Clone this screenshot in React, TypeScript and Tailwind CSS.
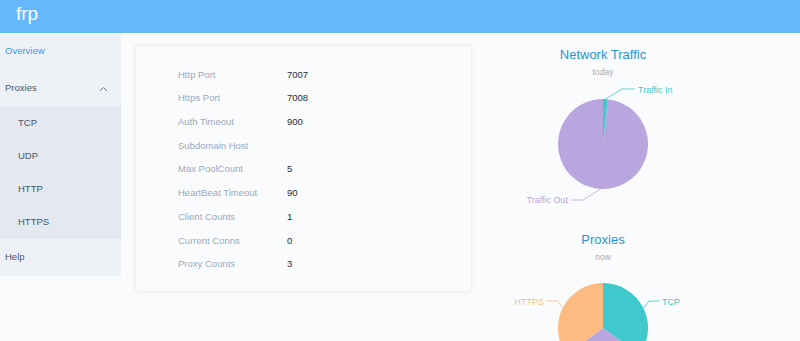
import React from "react";

const font = { fontFamily: '"Liberation Sans", Arial, sans-serif' };

type Row = { label: string; value: string };

const rows: Row[] = [
  { label: "Http Port", value: "7007" },
  { label: "Https Port", value: "7008" },
  { label: "Auth Timeout", value: "900" },
  { label: "Subdomain Host", value: "" },
  { label: "Max PoolCount", value: "5" },
  { label: "HeartBeat Timeout", value: "90" },
  { label: "Client Counts", value: "1" },
  { label: "Current Conns", value: "0" },
  { label: "Proxy Counts", value: "3" },
];

// slice path, angles in degrees clockwise from 12 o'clock
const slice = (cx: number, cy: number, r: number, a0: number, a1: number) => {
  const p = (a: number) => {
    const rad = (a * Math.PI) / 180;
    return [cx + r * Math.sin(rad), cy - r * Math.cos(rad)];
  };
  const [x0, y0] = p(a0);
  const [x1, y1] = p(a1);
  const large = a1 - a0 > 180 ? 1 : 0;
  return `M${cx},${cy} L${x0},${y0} A${r},${r} 0 ${large} 1 ${x1},${y1} Z`;
};

const TEAL = "#3fc9cc";
const PURPLE = "#b9a6df";
const ORANGE = "#fdbb82";

const Chart = ({ title, sub, children }: { title: string; sub: string; children: React.ReactNode }) => (
  <div className="w-[262px] h-[185px] flex flex-col items-center">
    <div className="pt-[7px] text-[13px] leading-[16px] text-[#2a93d5]">{title}</div>
    <div className="mt-[4px] text-[8.5px] leading-[10px] text-[#aaaaaa]">{sub}</div>
    <svg width="262" height="148" className="block">
      {children}
    </svg>
  </div>
);

export default function App() {
  return (
    <div className="w-[800px] h-[341px] overflow-hidden bg-[#fafbfc]" style={font}>
      {/* top bar */}
      <div className="h-[33px] bg-[#66b8fc] flex items-center pl-[16px] pb-[4px]">
        <span className="text-white text-[19px]">frp</span>
      </div>

      <div className="flex items-start">
        {/* sidebar */}
        <div className="w-[121px] bg-[#eef1f6] text-[9.5px] text-[#48576a]">
          <div className="h-[37px] flex items-center pl-[5px] text-[#3a9cf0]">Overview</div>
          <div className="h-[37px] flex items-center justify-between pl-[5px] pr-[13px]">
            <span>Proxies</span>
            <svg width="9" height="6" viewBox="0 0 9 6">
              <polyline points="1,5 4.5,1.5 8,5" fill="none" stroke="#6b7a8c" strokeWidth="1" />
            </svg>
          </div>
          <div className="bg-[#e4e8f1]">
            {["TCP", "UDP", "HTTP", "HTTPS"].map((t) => (
              <div key={t} className="h-[33px] flex items-center pl-[18px]">
                {t}
              </div>
            ))}
          </div>
          <div className="h-[37px] flex items-center pl-[5px]">Help</div>
        </div>

        {/* server info card */}
        <div className="ml-[14px] mt-[12px] w-[337px] h-[247px] bg-[#fafbfc] border border-[#eff1f4] rounded-[2px] shadow-[0_0_4px_rgba(0,0,0,0.04)] pt-[17px] pl-[42px]">
          {rows.map((r) => (
            <div key={r.label} className="h-[23.7px] flex items-center text-[9.5px]">
              <span className="w-[109px] text-[#99a9bf]">{r.label}</span>
              <span className="text-[#1f2d3d]">{r.value}</span>
            </div>
          ))}
        </div>

        {/* charts */}
        <div className="mt-[7px] flex flex-col">
          <Chart title="Network Traffic" sub="today">
            <path d={slice(131, 67, 45, 6, 360)} fill={PURPLE} />
            <path d={slice(131, 67, 45, 0, 6)} fill={TEAL} />
            <polyline points="133.4,22.1 150,12 163,12" fill="none" stroke={TEAL} strokeWidth="0.8" />
            <text x="166" y="15.5" fontSize="9" fill={TEAL}>Traffic In</text>
            <polyline points="128.6,112 111,123 99,123" fill="none" stroke={PURPLE} strokeWidth="0.8" />
            <text x="96" y="126" fontSize="9" fill={PURPLE} textAnchor="end">Traffic Out</text>
          </Chart>
          <Chart title="Proxies" sub="now">
            <path d={slice(131, 66, 45, 0, 126)} fill={TEAL} />
            <path d={slice(131, 66, 45, 126, 234)} fill={PURPLE} />
            <path d={slice(131, 66, 45, 234, 360)} fill={ORANGE} />
            <polyline points="90.6,46 86,39 74,39" fill="none" stroke={ORANGE} strokeWidth="0.8" />
            <text x="72" y="42.5" fontSize="9" fill={ORANGE} textAnchor="end">HTTPS</text>
            <polyline points="171.4,46 177,39 188,39" fill="none" stroke={TEAL} strokeWidth="0.8" />
            <text x="190" y="42.5" fontSize="9" fill={TEAL}>TCP</text>
          </Chart>
        </div>
      </div>
    </div>
  );
}
